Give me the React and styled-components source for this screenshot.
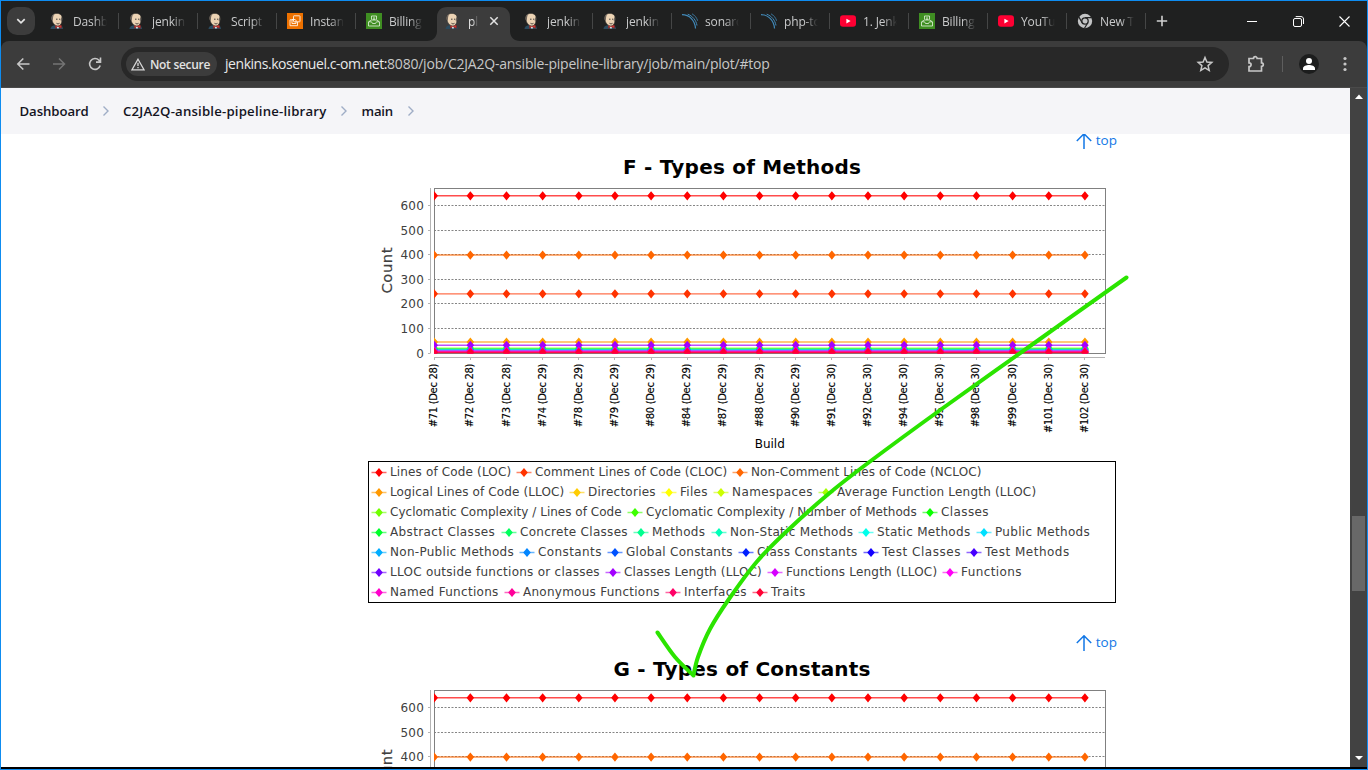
import React from 'react';
import styled, { createGlobalStyle, css } from 'styled-components';

const ui = '"Open Sans", "Noto Sans", sans-serif';
const chartFont = '"DejaVu Sans", sans-serif';

const GlobalStyle = createGlobalStyle`
  *, *::before, *::after { box-sizing: border-box; }
  html, body { margin: 0; height: 100%; overflow: hidden; background: #000; }
  svg { display: block; }
`;

const Window = styled.div`
  position: relative;
  width: 1368px;
  height: 770px;
  border: 1px solid #0e8cf0;
  display: flex;
  flex-direction: column;
  background: #000;
  font-family: ${ui};
  overflow: hidden;
`;

/* ---------- tab strip ---------- */
const TabStrip = styled.div`
  height: 40px;
  flex: none;
  display: flex;
  background: #1f2020;
  padding-left: 6px;
`;
const TabSearch = styled.div`
  width: 28px;
  height: 28px;
  margin: 6px 5px 0 0;
  border-radius: 10px;
  background: #3c3c3c;
  display: grid;
  place-items: center;
  flex: none;
`;
const Tab = styled.div`
  width: 79px;
  flex: none;
  height: 40px;
  position: relative;
  display: flex;
  align-items: center;
  padding: 0 0 0 10px;
  color: #c9cacb;
  ${(p) =>
    p.$separator &&
    css`
      &::after {
        content: '';
        position: absolute;
        right: 0;
        top: 12px;
        width: 1.5px;
        height: 16px;
        background: #454646;
      }
    `}
`;
const ActiveShape = styled.svg`
  position: absolute;
  left: -8px;
  top: 6px;
`;
const Favicon = styled.span`
  position: relative;
  width: 16px;
  height: 16px;
  flex: none;
  margin-right: 7px;
`;
const TabTitle = styled.span`
  position: relative;
  width: ${(p) => (p.$active ? 10 : 34)}px;
  font-size: 12px;
  line-height: 18px;
  padding-top: 1px;
  letter-spacing: -0.15px;
  white-space: nowrap;
  overflow: hidden;
  color: ${(p) => (p.$active ? '#e3e3e3' : '#c9cacb')};
  -webkit-mask-image: linear-gradient(to right, #000 ${(p) => (p.$active ? 50 : 60)}%, transparent 100%);
  mask-image: linear-gradient(to right, #000 ${(p) => (p.$active ? 50 : 60)}%, transparent 100%);
`;
const TabClose = styled.span`
  position: relative;
  margin-left: 11px;
`;
const NewTab = styled.div`
  width: 31px;
  height: 40px;
  display: grid;
  place-items: center;
`;
const WindowButtons = styled.div`
  margin-left: auto;
  display: flex;
  height: 40px;
`;
const WindowButton = styled.div`
  width: 46px;
  display: grid;
  place-items: center;
`;

/* ---------- toolbar ---------- */
const ToolbarBack = styled.div`
  background: #1f2020;
  flex: none;
`;
const Toolbar = styled.div`
  height: 47px;
  background: #3c3c3c;
  border-radius: 8px 8px 0 0;
  border-bottom: 1px solid #4a4a4a;
  display: flex;
  align-items: center;
  padding: 0 14px;
`;
const NavButtons = styled.div`
  display: flex;
  gap: 20px;
  width: 106px;
  flex: none;
`;
const AddressBar = styled.div`
  width: 1108px;
  height: 34px;
  flex: none;
  border-radius: 17px;
  background: #282828;
  display: flex;
  align-items: center;
  padding: 0 15px 0 5px;
`;
const SecurityChip = styled.div`
  width: 91px;
  height: 24px;
  border-radius: 12px;
  background: #3c3c3c;
  display: flex;
  align-items: center;
  gap: 5px;
  padding-left: 5px;
  color: #e3e3e3;
  font-size: 12px;
  font-weight: 600;
  white-space: nowrap;
  letter-spacing: -0.3px;
`;
const Url = styled.div`
  flex: 1;
  margin-left: 8px;
  font-size: 14px;
  line-height: 20px;
  color: #c7c7c7;
  white-space: nowrap;
  letter-spacing: -0.22px;
`;
const Host = styled.span`
  color: #e8e8e8;
  letter-spacing: -0.45px;
`;
const ToolbarActions = styled.div`
  display: flex;
  align-items: center;
  flex: 1;
  padding-left: 17px;
`;
const Divider = styled.div`
  width: 1.5px;
  height: 16px;
  background: #5e5e5e;
  margin: 0 16px 0 15.5px;
`;
const Avatar = styled.div`
  width: 20px;
  height: 20px;
  border-radius: 50%;
  background: #1c1d1d;
  display: grid;
  place-items: center;
  margin-right: 24px;
`;

/* ---------- page ---------- */
const Viewport = styled.div`
  height: 679px;
  flex: none;
  display: flex;
  overflow: hidden;
`;
const Page = styled.div`
  width: 1349px;
  background: #fff;
  display: flex;
  flex-direction: column;
  overflow: hidden;
`;
const Breadcrumbs = styled.div`
  height: 46px;
  flex: none;
  background: #f5f5f8;
  display: flex;
  align-items: center;
  padding-left: 18.5px;
`;
const Crumb = styled.span`
  font-size: 13.2px;
  font-weight: 600;
  color: #14141f;
  white-space: nowrap;
  width: ${(p) => p.$width}px;
  letter-spacing: ${(p) => p.$tracking}px;
`;
const CrumbArrow = styled.svg`
  margin: 0 13.5px 0 14px;
  flex: none;
`;
const Content = styled.main`
  flex: 1;
  min-height: 0;
  overflow: hidden;
  width: 750px;
  margin-left: 366px;
`;
const PlotBlock = styled.section`
  height: ${(p) => p.$height}px;
`;
const PlotBody = styled.div`
  padding-top: 4px;
`;
const TopLink = styled.div`
  height: 14px;
  display: flex;
  align-items: center;
  justify-content: flex-end;
  gap: 4px;
  color: #1277e6;
  font-size: 13.5px;
  line-height: 14px;
`;
const TopLabel = styled.span`
  padding-bottom: 2px;
`;
const Plot = styled.svg`
  overflow: visible;
`;
const Legend = styled.div`
  width: 748px;
  height: 142px;
  margin-left: 1px;
  border: 1px solid #000;
  padding: 0 2px;
`;
const LegendRow = styled.div`
  height: 20px;
  display: flex;
  align-items: center;
`;
const LegendItem = styled.div`
  width: ${(p) => p.$pitch}px;
  flex: none;
  display: flex;
  align-items: center;
  gap: 3px;
  font-family: ${chartFont};
  font-size: 12px;
  line-height: 20px;
  color: #404040;
  white-space: nowrap;
  letter-spacing: ${(p) => p.$tracking}px;
`;

/* ---------- scrollbar ---------- */
const Scrollbar = styled.div`
  width: 17px;
  background: #424242;
  display: flex;
  flex-direction: column;
  align-items: center;
  padding: 6px 0;
`;
const Thumb = styled.div`
  width: 13px;
  height: 75px;
  background: #686868;
  margin: 416px 0 auto;
`;
const Annotation = styled.svg`
  position: absolute;
  left: -1px;
  top: -1px;
  pointer-events: none;
`;

function JenkinsIcon() {
  return (
    <svg width="16" height="16" viewBox="1 0 16 16">
      <path d="M1.500 16c0-2 1.500-3.500 4-3.800h5.500c2 .4 3 1.800 3 3.800z" fill="#2b4a5e" />
      <path d="M6.300 12.500L9 16l2.500-3.500z" fill="#f4f4f4" />
      <path d="M2.700 5.500C2.400 2.300 5 .3 8 .4c3.500 0 5.500 2.300 5.200 5.600-.1 3.400-1.500 6.800-4.200 7C5.800 13 3 9.500 2.700 5.500z" fill="#ecd3b4" stroke="#33302e" strokeWidth=".6" />
      <path d="M2.400 6C2.300 2.500 4 .9 5.400.7 4.400 2.300 4.100 4 3.900 6.500l-.5 1.800z" fill="#6b625b" />
      <path d="M12.400 3.500c.9 1.600.9 3.600 0 6l-.7-2.200z" fill="#6b625b" />
      <path d="M7 6.200h1.500M10 6.200h1.300M7.500 10.300c1 .7 2 .7 3 0" stroke="#30302f" strokeWidth=".9" fill="none" />
      <path d="M8.500 13.600l-2-1.100v3zM8.500 13.600l3.800-1.600.3 3.300z" fill="#d33833" stroke="#7b1815" strokeWidth=".4" />
    </svg>
  );
}
function AwsIcon({ green }) {
  return (
    <svg width="16" height="16" viewBox="0 0 16 16">
      <rect width="16" height="16" fill={green ? '#3f8e22' : '#ed7100'} />
      {green ? (
        <g fill="none" stroke="#e7f4e1" strokeWidth=".8">
          <path d="M5.500 6.500v-3.500h5v3.500M8 3.800v3M6.800 6.200h2.500M3 8.500l2.500-1.500h5L13 8.500M2.500 8.800h3l1 1.700h3l1-1.700h3v4.200h-11z" />
        </g>
      ) : (
        <g fill="none" stroke="#fff3e4" strokeWidth=".9">
          <rect x="6.500" y="2.800" width="6.500" height="6" rx=".5" />
          <path d="M10.500 9v3.700H3V6.800h3.500M8.500 6.500H5v4h4V7" />
        </g>
      )}
    </svg>
  );
}
function SonarIcon() {
  return (
    <svg width="16" height="16" viewBox="0 0 16 16" fill="none" stroke="#4189b8">
      <path d="M0 1.700C7.500 1.700 13 7.500 13.500 15.500" strokeWidth="1.200" />
      <path d="M5.700 1.200C10.500 2.900 14.200 7.300 15 12.500" strokeWidth="1" />
      <path d="M10 .8c2.700 1.500 4.700 3.900 5.700 7" strokeWidth=".8" />
    </svg>
  );
}
function YoutubeIcon() {
  return (
    <svg width="16" height="16" viewBox="0 0 16 16">
      <rect y="2.300" width="16" height="11.500" rx="3" fill="#ff0033" />
      <path d="M6.400 5.700v4.700l4.200-2.350z" fill="#fff" />
    </svg>
  );
}
function ChromeIcon() {
  return (
    <svg width="16" height="16" viewBox="0 0 16 16">
      <circle cx="8" cy="8" r="7.200" fill="#c3c4c5" />
      <circle cx="8" cy="8" r="3.200" fill="#c3c4c5" stroke="#242525" strokeWidth="1.300" />
      <path d="M8 4.700h6.700M5.100 9.600L1.800 3.900M10.800 9.700L7.500 15.300" stroke="#242525" strokeWidth="1.200" />
    </svg>
  );
}

const icons = {
  jenkins: <JenkinsIcon />,
  ec2: <AwsIcon />,
  billing: <AwsIcon green />,
  sonar: <SonarIcon />,
  youtube: <YoutubeIcon />,
  chrome: <ChromeIcon />,
};

const tabs = [
  ['jenkins', 'Dashb'],
  ['jenkins', 'jenkin'],
  ['jenkins', 'Script'],
  ['ec2', 'Instan'],
  ['billing', 'Billing'],
  ['jenkins', 'pl'],
  ['jenkins', 'jenkin'],
  ['jenkins', 'jenkin'],
  ['sonar', 'sonarq'],
  ['sonar', 'php-to'],
  ['youtube', '1. Jenk'],
  ['billing', 'Billing'],
  ['youtube', 'YouTu'],
  ['chrome', 'New T'],
];
const ACTIVE = 5;

/* label, colour, distance to the next entry, letter spacing */
const legendRows = [
  [['Lines of Code (LOC)', '#ff0000', 145, 0.15], ['Comment Lines of Code (CLOC)', '#ff3300', 216, 0.1], ['Non-Comment Lines of Code (NCLOC)', '#ff6600', 254, 0.12]],
  [['Logical Lines of Code (LLOC)', '#ff9900', 198, 0.12], ['Directories', '#ffcc00', 92, 0.24], ['Files', '#ffff00', 52, 0.3], ['Namespaces', '#ccff00', 105, 0.4], ['Average Function Length (LLOC)', '#a4ff00', 223, 0.2]],
  [['Cyclomatic Complexity / Lines of Code', '#70ff00', 256, 0.02], ['Cyclomatic Complexity / Number of Methods', '#3dff00', 295, 0.06], ['Classes', '#0aff00', 72, 0.4]],
  [['Abstract Classes', '#00ff29', 130, 0.36], ['Concrete Classes', '#00ff5c', 132, 0.3], ['Methods', '#00ff8f', 78, 0.28], ['Non-Static Methods', '#00ffb8', 147, 0.31], ['Static Methods', '#00ffeb', 118, 0.29], ['Public Methods', '#00e0ff', 119, 0.32]],
  [['Non-Public Methods', '#00adff', 148, 0.29], ['Constants', '#0085ff', 88, 0.4], ['Global Constants', '#0052ff', 131, 0.28], ['Class Constants', '#001fff', 125, 0.34], ['Test Classes', '#1400ff', 103, 0.53], ['Test Methods', '#4700ff', 109, 0.5]],
  [['LLOC outside functions or classes', '#7000ff', 234, 0.26], ['Classes Length (LLOC)', '#a300ff', 162, 0.17], ['Functions Length (LLOC)', '#d600ff', 175, 0.21], ['Functions', '#ff00f5', 85, 0.4]],
  [['Named Functions', '#ff00cc', 133, 0.3], ['Anonymous Functions', '#ff0099', 161, 0.26], ['Interfaces', '#ff0066', 87, 0.28], ['Traits', '#ff0033', 59, 0.4]],
];

const builds = [
  '#71 (Dec 28)', '#72 (Dec 28)', '#73 (Dec 28)', '#74 (Dec 29)', '#78 (Dec 29)', '#79 (Dec 29)', '#80 (Dec 29)',
  '#84 (Dec 29)', '#87 (Dec 29)', '#88 (Dec 29)', '#90 (Dec 29)', '#91 (Dec 30)', '#92 (Dec 30)', '#94 (Dec 30)',
  '#95 (Dec 30)', '#98 (Dec 30)', '#99 (Dec 30)', '#101 (Dec 30)', '#102 (Dec 30)',
];

const series = [
  [640, '#ff0000'], [241, '#ff3300'], [399, '#ff6600'], [45, '#ff9900'], [20, '#70ff00'], [17, '#00ff5c'],
  [14, '#00ffb8'], [12, '#0085ff'], [32, '#a300ff'], [9, '#d600ff'], [6, '#ff00cc'], [5, '#ff0099'], [3, '#ff0066'], [1.5, '#ff0033'],
];

const LEFT = 67.2;
const STEP = 36.15;
const RIGHT = LEFT + STEP * 18;
const yOf = (v) => 201.1 - v * 0.2458;
const diamond = (x, y) => `M${x} ${y - 4.6}L${x + 3.8} ${y}L${x} ${y + 4.6}L${x - 3.8} ${y}z`;

/* hand-drawn tick: smooth curve through the pen positions of each stroke */
const smooth = (pts) =>
  pts.slice(0, -1).reduce((d, p1, i) => {
    const p0 = pts[i - 1] || p1;
    const p2 = pts[i + 1];
    const p3 = pts[i + 2] || p2;
    const c1 = [p1[0] + (p2[0] - p0[0]) / 6, p1[1] + (p2[1] - p0[1]) / 6];
    const c2 = [p2[0] - (p3[0] - p1[0]) / 6, p2[1] - (p3[1] - p1[1]) / 6];
    return `${d}C${c1} ${c2} ${p2}`;
  }, '');
const shortStroke = [[657.5, 632.5], [675, 657], [693.5, 675.5]];
const longStroke = [[693.5, 675.5], [698, 657], [710, 629], [729, 599], [757, 561.5], [787, 531], [829, 493.5], [868, 463], [943, 408], [1040, 339], [1126.5, 277.5]];
const tickPath = `M${shortStroke[0]}${smooth(shortStroke)}${smooth(longStroke)}`;

function Chart({ id, title, titleWidth }) {
  return (
    <Plot width="750" height="309" viewBox="0 0 750 309" fontFamily={chartFont}>
      <defs>
        <clipPath id={id}>
          <rect x="67" y="36.500" width="671" height="165" />
        </clipPath>
      </defs>
      <text x="375" y="22" textAnchor="middle" fontSize="20" fontWeight="700" textLength={titleWidth}>{title}</text>
      <text transform="translate(25 118.500) rotate(-90)" textAnchor="middle" fontSize="14.800" fill="#404040" stroke="#404040" strokeWidth=".2" textLength="46">Count</text>
      <path d="M63.500 36v165.500M67 205.500h671" stroke="#b4b4b4" fill="none" />
      {[0, 100, 200, 300, 400, 500, 600].map((v) => {
        const y = Math.floor(yOf(v)) + 0.5;
        return (
          <g key={v}>
            <path d={`M61 ${y}h2`} stroke="#b4b4b4" />
            <text x="57" y={y + 4} textAnchor="end" fontSize="12" fill="#404040" letterSpacing=".2">{v}</text>
            {v > 0 && <path d={`M67 ${y}h671`} stroke="#858585" strokeDasharray="2 1.500" />}
          </g>
        );
      })}
      <rect x="67.500" y="36.500" width="671" height="165" fill="none" stroke="#808080" />
      <g clipPath={`url(#${id})`}>
        {series.map(([v, color]) => (
          <g key={color}>
            <path d={`M${LEFT} ${yOf(v)}H${RIGHT}`} stroke={color} strokeWidth="1.400" strokeOpacity=".7" />
            <path d={builds.map((_, i) => diamond(LEFT + STEP * i, yOf(v))).join('')} fill={color} />
          </g>
        ))}
      </g>
      {builds.map((b, i) => (
        <g key={b}>
          <path d={`M${Math.floor(LEFT + STEP * i) + 0.5} 206v2`} stroke="#b4b4b4" />
          <text transform={`translate(${LEFT + STEP * i + 3} 211.600) rotate(-90)`} textAnchor="end" fontSize="10" stroke="#000" strokeWidth=".15" textLength={b.length > 12 ? 69.5 : 63.7}>{b}</text>
        </g>
      ))}
      <text x="402.800" y="296" textAnchor="middle" fontSize="12" textLength="30">Build</text>
    </Plot>
  );
}

function PlotSection({ id, title, titleWidth, height }) {
  return (
    <PlotBlock $height={height}>
      <TopLink>
        <svg width="16" height="16" viewBox="0 0 16 16" fill="none" stroke="#1277e6" strokeWidth="1.500">
          <path d="M8 16V1M.8 8L8 .8 15.200 8" />
        </svg>
        <TopLabel>top</TopLabel>
      </TopLink>
      <PlotBody>
        <Chart id={id} title={title} titleWidth={titleWidth} />
        <Legend>
          {legendRows.map((row, r) => (
            <LegendRow key={r}>
              {row.map(([label, color, pitch, tracking]) => (
                <LegendItem key={label} $pitch={pitch} $tracking={tracking}>
                  <svg width="16" height="12" viewBox="0 0 16 12">
                    <path d="M.5 6.500h15" stroke={color} strokeOpacity=".6" strokeWidth="1.500" />
                    <path d={diamond(8, 6.5)} fill={color} />
                  </svg>
                  {label}
                </LegendItem>
              ))}
            </LegendRow>
          ))}
        </Legend>
      </PlotBody>
    </PlotBlock>
  );
}

export default function App() {
  return (
    <>
      <GlobalStyle />
      <Window>
        <TabStrip>
          <TabSearch>
            <svg width="10" height="10" viewBox="0 0 10 10" fill="none" stroke="#e3e3e3" strokeWidth="1.700">
              <path d="M1.300 3.200L5 6.900l3.700-3.700" />
            </svg>
          </TabSearch>
          {tabs.map(([icon, title], i) => {
            const active = i === ACTIVE;
            return (
              <Tab key={i} $separator={i !== ACTIVE && i !== ACTIVE - 1}>
                {active && (
                  <ActiveShape width="93" height="34" viewBox="0 0 93 34">
                    <path d="M0 34c6 0 10-4 10-10V10C10 4 14 0 20 0h53c6 0 10 4 10 10v14c0 6 4 10 10 10z" fill="#3c3c3c" />
                  </ActiveShape>
                )}
                <Favicon>{icons[icon]}</Favicon>
                <TabTitle $active={active}>{title}</TabTitle>
                {active && (
                  <TabClose>
                    <svg width="10" height="10" viewBox="0 0 10 10" stroke="#e3e3e3" strokeWidth="1.500">
                      <path d="M1.300 1.300l7.400 7.400M8.700 1.300L1.300 8.700" />
                    </svg>
                  </TabClose>
                )}
              </Tab>
            );
          })}
          <NewTab>
            <svg width="12" height="12" viewBox="0 0 12 12" stroke="#d0d0d0" strokeWidth="1.600">
              <path d="M6 .8v10.400M.8 6h10.400" />
            </svg>
          </NewTab>
          <WindowButtons>
            <WindowButton>
              <svg width="10" height="10" viewBox="0 0 10 10" stroke="#fff"><path d="M0 5.500h10" /></svg>
            </WindowButton>
            <WindowButton>
              <svg width="11" height="11" viewBox="0 0 11 11" fill="none" stroke="#fff">
                <rect x=".5" y="2.500" width="8" height="8" rx="1.500" />
                <path d="M2.700.6H8c1.500 0 2.500 1 2.500 2.400v5" />
              </svg>
            </WindowButton>
            <WindowButton>
              <svg width="11" height="11" viewBox="0 0 11 11" stroke="#fff" strokeWidth="1.100"><path d="M.5.5l10 10M10.500.5l-10 10" /></svg>
            </WindowButton>
          </WindowButtons>
        </TabStrip>

        <ToolbarBack>
          <Toolbar>
            <NavButtons>
              <svg width="16" height="16" viewBox="0 0 16 16" fill="none" stroke="#c7c7c7" strokeWidth="1.600"><path d="M14.500 8H3M8.300 2.500L2.800 8l5.500 5.500" /></svg>
              <svg width="16" height="16" viewBox="0 0 16 16" fill="none" stroke="#747474" strokeWidth="1.500"><path d="M2 8h11M8 2.500L13.500 8 8 13.500" /></svg>
              <svg width="16" height="16" viewBox="0 0 16 16" fill="none" stroke="#c7c7c7" strokeWidth="1.600"><path d="M13.200 9.500A5.400 5.400 0 1 1 12 4.300l1.500 1.600M13.500 1.500v4.600H9" /></svg>
            </NavButtons>
            <AddressBar>
              <SecurityChip>
                <svg width="14" height="13" viewBox="0 0 14 13" fill="none" stroke="#d8d8d8" strokeWidth="1.300">
                  <path d="M7 1.200L13 11.800H1zM7 4.800v3.200M7 9v1.300" />
                </svg>
                Not secure
              </SecurityChip>
              <Url><Host>jenkins.kosenuel.c-om.net:</Host>8080/job/C2JA2Q-ansible-pipeline-library/job/main/plot/#top</Url>
              <svg width="18" height="18" viewBox="0 0 18 18" fill="none" stroke="#c7c7c7" strokeWidth="1.500">
                <path d="M9 2.500l1.900 4.500 4.900.4-3.700 3.200 1.100 4.800L9 12.800l-4.200 2.600 1.100-4.800L2.200 7.400l4.900-.4z" />
              </svg>
            </AddressBar>
            <ToolbarActions>
              <svg width="20" height="20" viewBox="0 0 20 20" fill="none" stroke="#c7c7c7" strokeWidth="1.700">
                <path d="M3 4.500h4.500a1.800 1.800 0 0 1 3.600 0H15.500v4.300a1.800 1.800 0 0 1 0 3.600V17H3v-4.300c2.800 0 2.800-3.800 0-3.800z" />
              </svg>
              <Divider />
              <Avatar>
                <svg width="12" height="12" viewBox="0 0 12 12" fill="#fff">
                  <circle cx="6" cy="3" r="3" /><path d="M0 12v-1.700C0 8.200 3.500 7 6 7s6 1.200 6 3.300V12z" />
                </svg>
              </Avatar>
              <svg width="4" height="16" viewBox="0 0 4 16" fill="#c7c7c7"><circle cx="2" cy="2.500" r="1.600" /><circle cx="2" cy="8" r="1.600" /><circle cx="2" cy="13.500" r="1.600" /></svg>
            </ToolbarActions>
          </Toolbar>
        </ToolbarBack>

        <Viewport>
          <Page>
            <Breadcrumbs>
              {[['Dashboard', 68, -0.08], ['C2JA2Q-ansible-pipeline-library', 203, 0.19], ['main', 31, -0.2]].map(([c, w, t]) => (
                <React.Fragment key={c}>
                  <Crumb $width={w} $tracking={t}>{c}</Crumb>
                  <CrumbArrow width="8" height="12" viewBox="0 0 8 12" fill="none" stroke="#9fadc6" strokeWidth="1.400"><path d="M1.500 1.500L6 6l-4.500 4.500" /></CrumbArrow>
                </React.Fragment>
              ))}
            </Breadcrumbs>
            <Content>
              <PlotSection id="plot-f" title="F - Types of Methods" titleWidth={238} height={502} />
              <PlotSection id="plot-g" title="G - Types of Constants" titleWidth={257} height={502} />
            </Content>
          </Page>
          <Scrollbar>
            <svg width="8" height="6" viewBox="0 0 8 6" fill="#fff"><path d="M4 .5L8 5H0z" /></svg>
            <Thumb />
            <svg width="8" height="6" viewBox="0 0 8 6" fill="#fff"><path d="M4 5L8 1H0z" /></svg>
          </Scrollbar>
        </Viewport>

        <Annotation width="1368" height="770" viewBox="0 0 1368 770" fill="none" stroke="#2be400" strokeWidth="4" strokeLinecap="round" strokeLinejoin="round">
          <path d={tickPath} />
        </Annotation>
      </Window>
    </>
  );
}
